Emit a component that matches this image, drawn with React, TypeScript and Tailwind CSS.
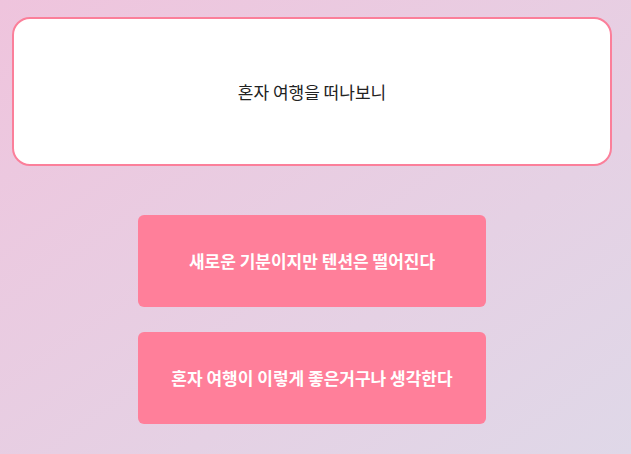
export default function App() {
  return (
    <div
      className="min-h-[454px] w-full bg-gradient-to-br from-[#efc4dd] to-[#dfd8e8] pl-3 pt-[17px] [font-family:'Noto_Sans_CJK_KR','Noto_Sans',sans-serif]"
    >
      <div className="w-[600px]">
        <div className="flex h-[149px] items-center justify-center rounded-[18px] border-2 border-[#fb7f9a] bg-white text-[17px] text-[#222]">
          혼자 여행을 떠나보니
        </div>
        <div className="mt-[49px] flex flex-col items-center gap-[25px]">
          <button className="flex h-[92px] w-[348px] items-center justify-center rounded-md bg-[#ff7f9a] text-[17px] font-semibold text-white">
            새로운 기분이지만 텐션은 떨어진다
          </button>
          <button className="flex h-[92px] w-[348px] items-center justify-center rounded-md bg-[#ff7f9a] text-[17px] font-semibold text-white">
            혼자 여행이 이렇게 좋은거구나 생각한다
          </button>
        </div>
      </div>
    </div>
  );
}
